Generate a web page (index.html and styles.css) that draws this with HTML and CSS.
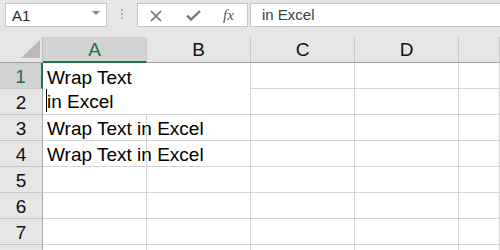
FILE: index.html
```html
<!DOCTYPE html>
<html lang="en">
<head>
    <meta charset="UTF-8">
    <title>Wrap Text in Excel</title>
    <link rel="stylesheet" href="styles.css">
</head>
<body>
    <div class="toolbar">
        <div class="name-box">
            <span>A1</span>
            <span class="drop"></span>
        </div>
        <div class="grip"><i></i><i></i><i></i></div>
        <div class="fx-buttons">
            <svg class="ico-cancel" width="12" height="12" viewBox="0 0 12 12"><path d="M1 1 L11 11 M11 1 L1 11" stroke="#707070" stroke-width="1.6" fill="none"/></svg>
            <svg class="ico-enter" width="15" height="11" viewBox="0 0 15 11"><path d="M1 5.5 L5 9.5 L14 1" stroke="#767676" stroke-width="2.4" fill="none"/></svg>
            <span class="fx">fx</span>
        </div>
        <div class="formula">in Excel</div>
    </div>

    <div class="sheet">
        <div class="corner"><span class="tri"></span></div>
        <div class="col-hdr active">A</div>
        <div class="col-hdr">B</div>
        <div class="col-hdr">C</div>
        <div class="col-hdr">D</div>
        <div class="col-hdr"></div>

        <div class="row-hdr active">1</div>
        <div class="edit-box">
            Wrap Text<br>in Excel
            <span class="caret"></span>
        </div>
        <div class="cell"></div><div class="cell"></div><div class="cell"></div>

        <div class="row-hdr">2</div>
        <div class="cell"></div><div class="cell"></div><div class="cell"></div>

        <div class="row-hdr">3</div>
        <div class="cell">Wrap Text in Excel</div><div class="cell"></div><div class="cell"></div><div class="cell"></div><div class="cell"></div>

        <div class="row-hdr">4</div>
        <div class="cell">Wrap Text in Excel</div><div class="cell"></div><div class="cell"></div><div class="cell"></div><div class="cell"></div>

        <div class="row-hdr">5</div>
        <div class="cell"></div><div class="cell"></div><div class="cell"></div><div class="cell"></div><div class="cell"></div>

        <div class="row-hdr">6</div>
        <div class="cell"></div><div class="cell"></div><div class="cell"></div><div class="cell"></div><div class="cell"></div>

        <div class="row-hdr">7</div>
        <div class="cell"></div><div class="cell"></div><div class="cell"></div><div class="cell"></div><div class="cell"></div>

        <!-- row 8 is only a sliver at the bottom edge -->
        <div class="row-hdr"></div>
        <div class="cell"></div><div class="cell"></div><div class="cell"></div><div class="cell"></div><div class="cell"></div>
    </div>
</body>
</html>
```

FILE: styles.css
```css
* { box-sizing: border-box; }
body {
    margin: 0; width: 500px; height: 250px; overflow: hidden;
    background: #fff;
    font-family: "Liberation Sans", Arial, sans-serif;
}

/* formula bar */
.toolbar {
    height: 37px; background: #e6e6e6;
    display: flex; align-items: flex-start;
    padding: 3px 0 0 5px;
}
.name-box {
    width: 102px; height: 24px; background: #fff;
    border: 1px solid #c6c6c6;
    display: flex; align-items: center; justify-content: space-between;
    padding: 0 6px 0 6px;
    font-size: 15px; color: #262626;
}
.drop {
    width: 0; height: 0;
    border-left: 4px solid transparent; border-right: 4px solid transparent;
    border-top: 4px solid #8a8a8a;
    margin-top: -4px;
}
.grip {
    width: 30px; height: 24px;
    display: flex; flex-direction: column; align-items: center;
    gap: 2px; padding-top: 6px;
}
.grip i { width: 2px; height: 2px; background: #b4b4b4; }
.fx-buttons {
    width: 111px; height: 24px; background: #fff;
    border: 1px solid #c6c6c6;
    display: flex; align-items: center;
    padding-left: 12px;
}
.ico-cancel { margin-top: 2px; }
.ico-enter { margin-left: 24px; margin-top: 1px; }
.fx {
    margin-left: 22px;
    font-family: "Liberation Serif", serif; font-style: italic;
    font-size: 15px; color: #555;
}
.formula {
    flex: 1; height: 24px; margin-left: 2px; background: #fff;
    border: 1px solid #c6c6c6; border-right: none;
    padding: 2px 0 0 11px;
    font-size: 15px; color: #404040;
}

/* sheet grid */
.sheet {
    display: grid;
    grid-template-columns: 43px 104px 104px 104px 104px 1fr;
    grid-template-rows: 26px repeat(8, 26px);
    font-size: 19px;
}
.corner {
    background: #e6e6e6;
    border-right: 1px solid #bdbdbd; border-bottom: 1px solid #9e9e9e;
    display: flex; justify-content: flex-end; align-items: flex-end;
    padding: 0 2px 4px 0;
}
.tri {
    width: 0; height: 0;
    border-left: 19px solid transparent;
    border-bottom: 18px solid #b9b9b9;
}
.col-hdr {
    background: #e6e6e6; color: #111;
    border-right: 1px solid #c8c8c8; border-bottom: 1px solid #9e9e9e;
    text-align: center; line-height: 22px; padding-top: 2px;
}
.col-hdr.active {
    background: #d2d2d2; color: #217346;
    border-bottom: 2px solid #217346;
}
.row-hdr {
    background: #e6e6e6; color: #111;
    border-right: 1px solid #a9a9a9; border-bottom: 1px solid #c6c6c6;
    text-align: center; line-height: 22px; padding-top: 3px;
}
.row-hdr.active {
    background: #d2d2d2; color: #217346;
    border-right: 2px solid #217346;
}
.cell {
    border-right: 1px solid #d4d4d4; border-bottom: 1px solid #d4d4d4;
    line-height: 22px; padding: 3px 0 0 4px;
    white-space: nowrap; color: #000;
}
.edit-box {
    grid-column: 2 / span 2; grid-row: 2 / span 2;
    position: relative;
    background: #fff;
    border-right: 1px solid #d4d4d4; border-bottom: 1px solid #d4d4d4;
    line-height: 24px; padding: 3px 0 0 4px; color: #000;
}
.caret {
    position: absolute; left: 3px; top: 26px;
    width: 1px; height: 23px; background: #000;
}
```
